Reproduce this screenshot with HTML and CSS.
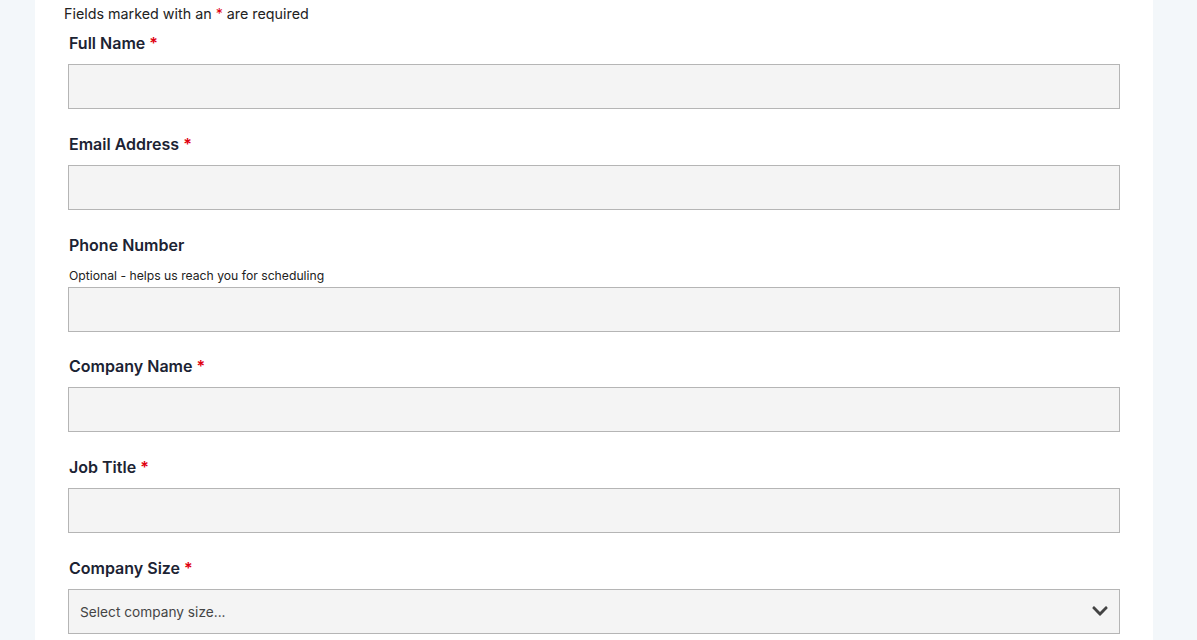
FILE: index.html
```html
<!DOCTYPE html>
<html lang="en">
<head>
    <meta charset="UTF-8">
    <meta name="viewport" content="width=device-width, initial-scale=1.0">
    <title>Request a Demo</title>
    <link rel="stylesheet" href="styles.css">
</head>
<body>
    <div class="container">
        <p class="intro">Fields marked with an <span class="req">*</span> are required</p>

        <form class="form">
            <div class="field">
                <label for="fullName">Full Name <span class="req">*</span></label>
                <input type="text" id="fullName" class="input">
            </div>

            <div class="field">
                <label for="email">Email Address <span class="req">*</span></label>
                <input type="email" id="email" class="input">
            </div>

            <div class="field has-help">
                <label for="phone">Phone Number</label>
                <div class="help">Optional - helps us reach you for scheduling</div>
                <input type="tel" id="phone" class="input">
            </div>

            <div class="field">
                <label for="company">Company Name <span class="req">*</span></label>
                <input type="text" id="company" class="input">
            </div>

            <div class="field">
                <label for="jobTitle">Job Title <span class="req">*</span></label>
                <input type="text" id="jobTitle" class="input">
            </div>

            <div class="field">
                <label for="companySize">Company Size <span class="req">*</span></label>
                <div class="select-wrap">
                    <select id="companySize" class="input select">
                        <option value="">Select company size...</option>
                        <option>1-10</option>
                        <option>11-50</option>
                        <option>51-200</option>
                        <option>201-1000</option>
                        <option>1000+</option>
                    </select>
                    <svg class="chevron" viewBox="0 0 448 512" width="18" height="18" aria-hidden="true">
                        <path d="M207 381.5L12.7 187.1c-9.4-9.4-9.4-24.6 0-33.9l22.7-22.7c9.4-9.4 24.5-9.4 33.9 0L224 284.5l154.7-154c9.4-9.3 24.5-9.3 33.9 0l22.7 22.7c9.4 9.4 9.4 24.6 0 33.9L241 381.5c-9.4 9.4-24.6 9.4-34 0z"/>
                    </svg>
                </div>
            </div>
        </form>
    </div>
</body>
</html>
```

FILE: styles.css
```css
* {
    margin: 0;
    padding: 0;
    box-sizing: border-box;
}

body {
    font-family: Inter, "Noto Sans", sans-serif;
    background: #f3f7fa;
    color: #1f2937;
    padding: 0 44px 0 35px;
}

.container {
    background: #fff;
    min-height: 100vh;
    padding: 3px 29px 40px 29px;
}

.intro {
    font-size: 14.3px;
    line-height: 22px;
    color: #222;
    margin-bottom: 6px;
}

.req {
    color: #e0000f;
}

.form {
    padding: 0 4px;
}

.field {
    margin-bottom: 23px;
}

.field.has-help {
    margin-bottom: 22px;
}

label {
    display: block;
    font-size: 16px;
    font-weight: 600;
    line-height: 24px;
    color: #1c2333;
    margin-bottom: 9px;
    padding-left: 1px;
}

.has-help label {
    margin-bottom: 10px;
}

.help {
    font-size: 12.2px;
    line-height: 18px;
    color: #222;
    margin: 0 0 2px 1px;
}

.input {
    display: block;
    width: 100%;
    height: 45px;
    background: #f4f4f4;
    border: 1px solid #b5b5b5;
    border-radius: 0;
    font-family: inherit;
    font-size: 13.7px;
    color: #444;
    padding: 0 11px;
    outline: none;
}

.select-wrap {
    position: relative;
}

.select {
    appearance: none;
    -webkit-appearance: none;
}

.chevron {
    position: absolute;
    right: 11px;
    top: 13px;
    fill: #444;
    pointer-events: none;
}
```
